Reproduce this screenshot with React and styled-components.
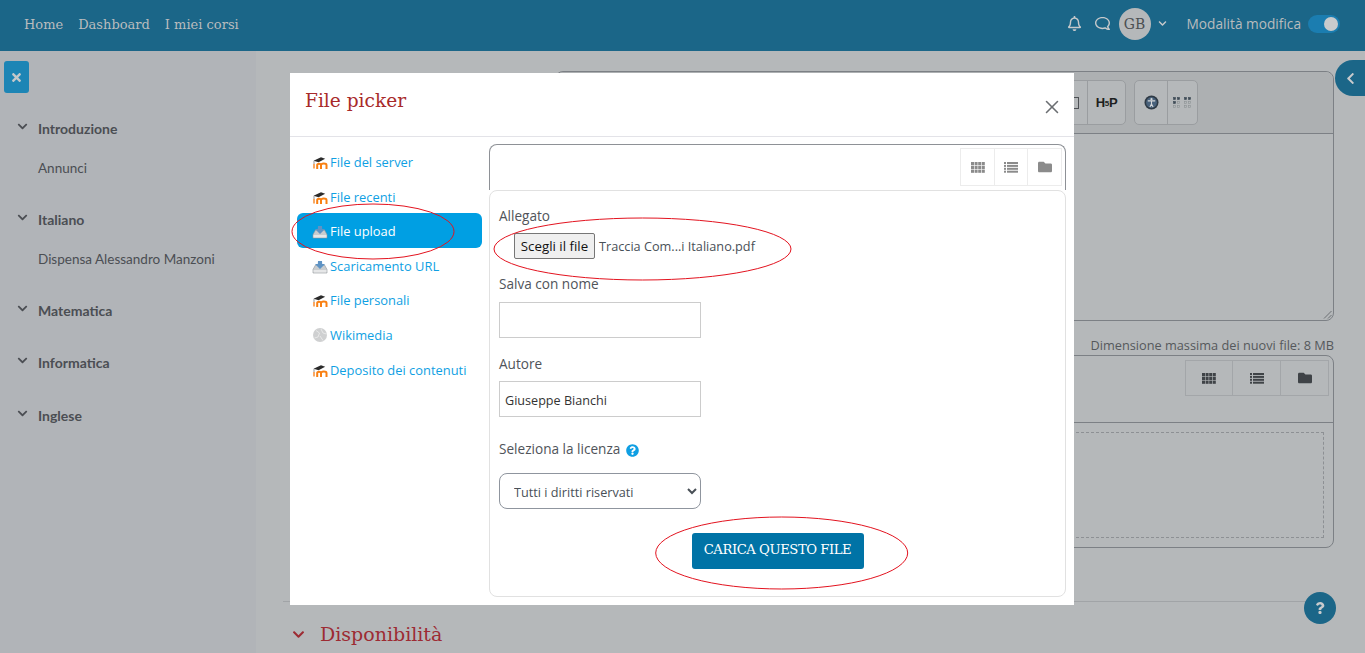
import React from "react";
import styled, { createGlobalStyle } from "styled-components";
import {
  FaChevronDown,
  FaChevronLeft,
  FaFolder,
  FaQuestion,
  FaQuestionCircle,
  FaRegBell,
  FaRegComment,
  FaTimes,
} from "react-icons/fa";
import { X } from "lucide-react";

const GlobalStyle = createGlobalStyle`
  html, body {
    margin: 0;
    height: 653px;
    overflow: hidden;
    background: #b5b8ba;
    font-family: "Open Sans", "Liberation Sans", sans-serif;
  }
  * { box-sizing: border-box; }
`;

const SLAB = `"DejaVu Serif", "Liberation Serif", serif`;
const LATO = `Lato, "Open Sans", sans-serif`;

const Page = styled.div`
  position: relative;
  width: 1365px;
  height: 653px;
  overflow: hidden;
`;
const Header = styled.header`
  height: 51px;
  background: #1b6688;
  display: flex;
  align-items: center;
  padding: 0 25px 4px 24px;
  color: #b9bcbe;
`;
const Nav = styled.nav`
  display: flex;
  gap: 15px;
  flex: 1;
  padding-top: 2px;
  font-family: ${SLAB};
  font-size: 13px;
`;
const IconSlot = styled.span`
  display: flex;
  color: #c6c9cb;
  font-size: ${(p) => p.$size || 15}px;
  margin-right: ${(p) => p.$gap || 0}px;
`;
const Avatar = styled.span`
  width: 32px;
  height: 32px;
  border-radius: 50%;
  background: #b5b8ba;
  color: #4c4f52;
  font-family: ${SLAB};
  font-size: 14px;
  display: flex;
  align-items: center;
  justify-content: center;
  margin-right: 7px;
`;
const EditLabel = styled.span`
  font-size: 13.7px;
  margin: 0 7px 0 20px;
  color: #b9bcbe;
`;
const Toggle = styled.span`
  width: 32px;
  height: 18px;
  border-radius: 9px;
  background: #1b7db0;
  display: flex;
  justify-content: flex-end;
  align-items: center;
  padding-right: 2px;
  &::after {
    content: "";
    width: 14px;
    height: 14px;
    border-radius: 50%;
    background: #c9cbcd;
  }
`;
const Body = styled.div`
  display: flex;
  height: 602px;
`;
const Sidebar = styled.aside`
  width: 256px;
  background: #b1b4b8;
  padding: 10px 0 0 4px;
  font-family: ${LATO};
  color: #4b4e53;
`;
const CloseDrawer = styled.button`
  width: 25px;
  height: 32px;
  border: 0;
  border-radius: 3px;
  background: #1d85b5;
  color: #c5c8ca;
  font-size: 13px;
  display: flex;
  align-items: center;
  justify-content: center;
  padding: 0;
  margin-bottom: 25px;
`;
const Section = styled.section`
  padding-left: 13px;
  margin-bottom: 32.25px;
`;
const SectionTitle = styled.div`
  display: flex;
  align-items: center;
  height: 20px;
  gap: 10px;
  font-weight: 700;
  font-size: 14px;
  svg {
    font-size: 11px;
    margin-top: -4px;
  }
`;
const SectionItem = styled.div`
  margin: 20px 0 -1px 21px;
  height: 20px;
  line-height: 20px;
  font-size: 13.5px;
`;
const Main = styled.main`
  flex: 1;
  background: #b5b8ba;
  padding: 20px 31px 0 34px;
  color: #4e5155;
`;
const Field = styled.div`
  margin-left: 265px;
`;
const Editor = styled.div`
  height: 250px;
  border: 1px solid #7c8085;
  border-radius: 8px;
  position: relative;
`;
const EditorToolbar = styled.div`
  height: 62px;
  border-bottom: 1px solid #7c8085;
  background: #adb0b2;
  border-radius: 8px 8px 0 0;
  display: flex;
  gap: 8px;
  padding: 8px 0 0 ${(p) => p.$indent}px;
`;
const ToolGroup = styled.div`
  height: 45px;
  border: 1px solid #9a9da0;
  border-radius: 5px;
  background: #b5b8ba;
  display: flex;
`;
const ToolButton = styled.span`
  width: ${(p) => p.$w}px;
  display: flex;
  align-items: center;
  justify-content: ${(p) => p.$align || "center"};
  padding-right: ${(p) => p.$pad || 0}px;
  & + & {
    border-left: 1px solid #9a9da0;
  }
`;
const TableGlyph = styled.span`
  width: 12px;
  height: 12px;
  border: 1px solid #4e5155;
`;
const H5P = styled.span`
  font-family: "Liberation Sans", sans-serif;
  font-weight: 700;
  font-size: 13px;
  letter-spacing: -0.4px;
  color: #1d1f21;
  small {
    font-size: 8px;
    position: relative;
    top: -1px;
  }
`;
const Grip = styled.svg`
  position: absolute;
  right: 1px;
  bottom: 1px;
`;
const SizeNote = styled.div`
  height: 21px;
  margin-top: 13px;
  text-align: right;
  font-size: 12.75px;
  line-height: 22px;
  color: #55585c;
  white-space: nowrap;
`;
const FileBox = styled.div`
  height: 193px;
  border: 1px solid #7c8085;
  border-radius: 8px;
`;
const FileToolbar = styled.div`
  height: 67px;
  border-bottom: 1px solid #7c8085;
  padding: 4px 4px 0 0;
  display: flex;
  justify-content: flex-end;
`;
const ViewButton = styled.span`
  width: ${(p) => p.$w}px;
  height: ${(p) => p.$h}px;
  display: flex;
  align-items: center;
  justify-content: center;
  border: 1px solid ${(p) => p.$line};
  color: ${(p) => p.$ink};
  font-size: 14px;
  & + & {
    border-left: 0;
  }
`;
const DropArea = styled.div`
  height: 106px;
  margin: 9px 9px 0 0;
  border: 1px dashed #8d9094;
`;
const Divider = styled.div`
  margin-top: 53px;
  margin-left: -7px;
  margin-right: 24px;
  border-top: 1px solid #a1a4a7;
`;
const SectionHeading = styled.h3`
  margin: 19px 0 0;
  display: flex;
  align-items: center;
  gap: 15px;
  font-family: ${SLAB};
  font-weight: 400;
  font-size: 19px;
  line-height: 26px;
  color: #9d2b33;
  svg {
    font-size: 13px;
    margin-left: 2px;
  }
`;
const DrawerTab = styled.div`
  position: absolute;
  right: 0;
  top: 60px;
  width: 30px;
  height: 36px;
  border-radius: 18px 0 0 18px;
  background: #1b6688;
  color: #c9cbcd;
  font-size: 13px;
  display: flex;
  align-items: center;
  justify-content: center;
`;
const HelpButton = styled.div`
  position: absolute;
  left: 1304px;
  top: 592px;
  width: 32px;
  height: 32px;
  border-radius: 50%;
  background: #1b6688;
  color: #c9cbcd;
  font-size: 12px;
  display: flex;
  align-items: center;
  justify-content: center;
`;

const Modal = styled.div`
  position: absolute;
  left: 290px;
  top: 73px;
  width: 784px;
  height: 532px;
  background: #fff;
  color: #495057;
`;
const ModalHeader = styled.div`
  height: 64px;
  border-bottom: 1px solid #e3e3e8;
  display: flex;
  align-items: flex-start;
  justify-content: space-between;
  padding: 14px 11px 0 15px;
`;
const ModalTitle = styled.h5`
  margin: 0;
  font-family: ${SLAB};
  font-weight: 400;
  font-size: 18.6px;
  line-height: 28px;
  color: #a82a2a;
`;
const CloseButton = styled.button`
  border: 0;
  background: none;
  padding: 0;
  margin-top: 9px;
  color: #6b6e72;
  display: flex;
`;
const ModalBody = styled.div`
  display: flex;
  padding: 7px 8px 8px 7px;
  gap: 7px;
`;
const Repos = styled.ul`
  width: 185px;
  list-style: none;
  margin: 0;
  padding: 0;
`;
const Repo = styled.li`
  height: 34.55px;
  padding: 2px 0 0 15px;
  display: flex;
  align-items: center;
  gap: 2px;
  border-radius: 6px;
  font-size: 12.9px;
  white-space: nowrap;
  color: ${(p) => (p.$active ? "#fff" : "#0f9fe3")};
  background: ${(p) => (p.$active ? "#009fe3" : "transparent")};
  font-weight: ${(p) => (p.$active ? 500 : 400)};
`;
const Content = styled.div`
  flex: 1;
  display: flex;
  flex-direction: column;
`;
const ContentBar = styled.div`
  height: 46px;
  border: 1px solid #8e9196;
  border-bottom: 0;
  border-radius: 8px 8px 0 0;
  padding: 3px 3px 0 0;
  display: flex;
  justify-content: flex-end;
`;
const FormPanel = styled.form`
  height: 407px;
  border: 1px solid #e1e1e1;
  border-radius: 8px;
  padding: 15px 9px 0;
  display: flex;
  flex-direction: column;
`;
const Label = styled.label`
  height: 20px;
  line-height: 20px;
  font-size: 13.6px;
  margin-top: ${(p) => p.$top || 0}px;
  display: flex;
  align-items: center;
  gap: 6px;
  color: #50545a;
  svg {
    color: #0f9fe3;
    font-size: 13px;
    margin-top: 3px;
  }
`;
const FileRow = styled.div`
  height: 26px;
  margin: 7px 0 0 15px;
  display: flex;
  align-items: center;
  gap: 4px;
  font-size: 12.7px;
`;
const PickButton = styled.button`
  width: 81px;
  height: 26px;
  padding: 0;
  background: #efefef;
  border: 1px solid #767676;
  border-radius: 2px;
  color: #111;
  font: 13.3px "Open Sans", sans-serif;
`;
const TextInput = styled.input`
  width: 202px;
  height: 36px;
  margin-top: ${(p) => p.$top}px;
  padding: 2px 5px 0;
  border: 1px solid #ccc;
  font: 12.6px "Open Sans", sans-serif;
  color: #333;
  outline: 0;
`;
const LicenseSelect = styled.select`
  width: 202px;
  height: 36px;
  margin-top: 14px;
  padding: 1px 0 0 10px;
  border: 1px solid #8f959e;
  border-radius: 8px;
  background: #fff;
  font: 12.7px "Open Sans", sans-serif;
  color: #495057;
`;
const UploadButton = styled.button`
  align-self: center;
  width: 172px;
  height: 36px;
  margin-top: 24px;
  border: 0;
  border-radius: 3px;
  background: #0073a6;
  color: #fff;
  font-family: ${SLAB};
  font-size: 13.2px;
  letter-spacing: -0.45px;
  white-space: nowrap;
  padding: 0 0 3px;
`;
const Marks = styled.svg`
  position: absolute;
  inset: 0;
  pointer-events: none;
`;

const MoodleIcon = () => (
  <svg width="16" height="16" viewBox="0 0 16 16">
    <path d="M1 10h2v4.5H1z" fill="#f9a862" />
    <path
      d="M5.2 15v-4c0-1.7 3.6-1.9 3.8 0v4M9 11c.2-1.9 5.3-2.1 5.5 0v4"
      fill="none"
      stroke="#f98012"
      strokeWidth="2"
    />
    <path d="M1.5 6.8 9 3.2l4.2 1.5-6.6 3.5z" fill="#2b2b2b" />
    <path d="M2 7v3" stroke="#666" strokeWidth=".7" />
  </svg>
);
const UploadIcon = () => (
  <svg width="16" height="16" viewBox="0 0 16 16">
    <path d="M3.5 7 1 11.5v3.5h14v-3.5L12.5 7z" fill="#c9ccce" stroke="#8f9498" strokeWidth=".6" />
    <path d="M1.5 12h13v2.5h-13z" fill="#e6e7e8" />
    <path d="M6 3h4l.2 3H13l-5 5-5-5h2.8z" fill="#5f93c4" />
  </svg>
);
const WikiIcon = () => (
  <svg width="16" height="16" viewBox="0 0 16 16">
    <circle cx="8" cy="8" r="7" fill="#cfd0d1" />
    <path d="M4 3.5 7.5 6 6 10l-3.5 1M9 2l2 4 3.5 1M8 9l3 4.5" stroke="#eeeeee" strokeWidth=".8" fill="none" />
  </svg>
);
const AccessIcon = () => (
  <svg width="15" height="15" viewBox="0 0 15 15">
    <circle cx="7.5" cy="7.5" r="7" fill="#2f3a45" />
    <circle cx="7.5" cy="7.5" r="5.4" fill="#49627c" />
    <circle cx="7.5" cy="4.2" r="1.1" fill="#d5d7d9" />
    <path d="M3.8 5.9h7.4M7.5 5.9v3M7.5 8.9 5.9 12M7.5 8.9l1.6 3.1" stroke="#d5d7d9" strokeWidth="1.1" fill="none" />
  </svg>
);
// two braille cells, only the dots of the first letters are filled
const BrailleIcon = () => {
  const filled = ["0-0", "1-0", "0-1", "3-0", "4-0"];
  const cells = [];
  [0, 1, 3, 4].forEach((col) =>
    [0, 1, 2].forEach((row) => {
      const key = `${col}-${row}`;
      const on = filled.includes(key);
      cells.push(
        <rect
          key={key}
          x={col * 4 + 0.5 - (col > 1 ? 1 : 0)}
          y={row * 4 + 0.5}
          width="2"
          height="2"
          fill={on ? "#3d4a55" : "none"}
          stroke={on ? "#3d4a55" : "#8d9194"}
          strokeWidth=".6"
        />
      );
    })
  );
  return (
    <svg width="19" height="12" viewBox="0 0 19 12">
      {cells}
    </svg>
  );
};
// four columns by three rows, as the old font-awesome "th" glyph
const GridGlyph = () => (
  <svg width="14" height="11" viewBox="0 0 14 11" fill="currentColor">
    {[0, 1, 2].map((row) =>
      [0, 1, 2, 3].map((col) => (
        <rect key={`${row}-${col}`} x={col * 3.6} y={row * 3.8} width="3" height="3.2" />
      ))
    )}
  </svg>
);
const ListGlyph = () => (
  <svg width="14" height="11" viewBox="0 0 14 11" fill="currentColor">
    {[0, 1, 2, 3].map((row) => (
      <g key={row}>
        <rect x="0" y={row * 2.9} width="2" height="2" />
        <rect x="3" y={row * 2.9} width="11" height="2" />
      </g>
    ))}
  </svg>
);

const repos = [
  { name: "File del server", Icon: MoodleIcon },
  { name: "File recenti", Icon: MoodleIcon },
  { name: "File upload", Icon: UploadIcon, active: true },
  { name: "Scaricamento URL", Icon: UploadIcon },
  { name: "File personali", Icon: MoodleIcon },
  { name: "Wikimedia", Icon: WikiIcon },
  { name: "Deposito dei contenuti", Icon: MoodleIcon },
];

const sections = [
  { title: "Introduzione", items: ["Annunci"] },
  { title: "Italiano", items: ["Dispensa Alessandro Manzoni"] },
  { title: "Matematica" },
  { title: "Informatica" },
  { title: "Inglese" },
];

function ViewButtons({ w, h, line, ink }) {
  return (
    <>
      {[GridGlyph, ListGlyph, FaFolder].map((Icon, i) => (
        <ViewButton key={i} $w={w[i]} $h={h} $line={line} $ink={ink}>
          <Icon />
        </ViewButton>
      ))}
    </>
  );
}

export default function App() {
  return (
    <Page>
      <GlobalStyle />
      <Header>
        <Nav>
          <span>Home</span>
          <span>Dashboard</span>
          <span>I miei corsi</span>
        </Nav>
        <IconSlot $gap={13}>
          <FaRegBell />
        </IconSlot>
        <IconSlot $gap={9}>
          <FaRegComment style={{ transform: "scaleX(-1)" }} />
        </IconSlot>
        <Avatar>GB</Avatar>
        <IconSlot $size={9}>
          <FaChevronDown />
        </IconSlot>
        <EditLabel>Modalità modifica</EditLabel>
        <Toggle />
      </Header>
      <Body>
        <Sidebar>
          <CloseDrawer>
            <FaTimes />
          </CloseDrawer>
          {sections.map((s) => (
            <Section key={s.title}>
              <SectionTitle>
                <FaChevronDown />
                {s.title}
              </SectionTitle>
              {s.items && s.items.map((it) => <SectionItem key={it}>{it}</SectionItem>)}
            </Section>
          ))}
        </Sidebar>
        <Main>
          <Field>
            <Editor>
              <EditorToolbar $indent={9}>
                <ToolGroup>
                  <ToolButton $w={521} $align="flex-end" $pad={8}>
                    <TableGlyph />
                  </ToolButton>
                  <ToolButton $w={38}>
                    <H5P>
                      H<small>5</small>P
                    </H5P>
                  </ToolButton>
                </ToolGroup>
                <ToolGroup>
                  <ToolButton $w={32}>
                    <AccessIcon />
                  </ToolButton>
                  <ToolButton $w={30}>
                    <BrailleIcon />
                  </ToolButton>
                </ToolGroup>
              </EditorToolbar>
              <Grip width="9" height="9" viewBox="0 0 9 9">
                <path d="M1 8.5 8.5 1M5 8.5 8.5 5" stroke="#6d7074" strokeWidth="1" />
              </Grip>
            </Editor>
            <SizeNote>Dimensione massima dei nuovi file: 8 MB</SizeNote>
            <FileBox>
              <FileToolbar>
                <ViewButtons w={[48, 48, 48]} h={36} line="#a3a6a9" ink="#3f4347" />
              </FileToolbar>
              <DropArea />
            </FileBox>
          </Field>
          <Divider />
          <SectionHeading>
            <FaChevronDown />
            Disponibilità
          </SectionHeading>
        </Main>
      </Body>
      <DrawerTab>
        <FaChevronLeft />
      </DrawerTab>
      <HelpButton>
        <FaQuestion />
      </HelpButton>

      <Modal>
        <ModalHeader>
          <ModalTitle>File picker</ModalTitle>
          <CloseButton type="button">
            <X size={22} strokeWidth={1.7} />
          </CloseButton>
        </ModalHeader>
        <ModalBody>
          <Repos>
            {repos.map(({ name, Icon, active }) => (
              <Repo key={name} $active={active}>
                <Icon />
                {name}
              </Repo>
            ))}
          </Repos>
          <Content>
            <ContentBar>
              <ViewButtons w={[35, 33, 34]} h={38} line="#ececec" ink="#8b8b8b" />
            </ContentBar>
            <FormPanel>
              <Label>Allegato</Label>
              <FileRow>
                <PickButton type="button">Scegli il file</PickButton>
                <span>Traccia Com...i Italiano.pdf</span>
              </FileRow>
              <Label $top={15}>Salva con nome</Label>
              <TextInput $top={8} />
              <Label $top={16}>Autore</Label>
              <TextInput $top={7} defaultValue="Giuseppe Bianchi" />
              <Label $top={22}>
                Seleziona la licenza
                <FaQuestionCircle />
              </Label>
              <LicenseSelect defaultValue="all">
                <option value="all">Tutti i diritti riservati</option>
              </LicenseSelect>
              <UploadButton type="button">CARICA QUESTO FILE</UploadButton>
            </FormPanel>
          </Content>
        </ModalBody>
        <Marks width="784" height="532" viewBox="0 0 784 532" fill="none" stroke="#e3131f" strokeWidth="1">
          <ellipse cx="83" cy="158.5" rx="81" ry="27.5" />
          <ellipse cx="352.5" cy="176" rx="148.5" ry="31" />
          <ellipse cx="491.7" cy="480" rx="126" ry="36" />
        </Marks>
      </Modal>
    </Page>
  );
}
